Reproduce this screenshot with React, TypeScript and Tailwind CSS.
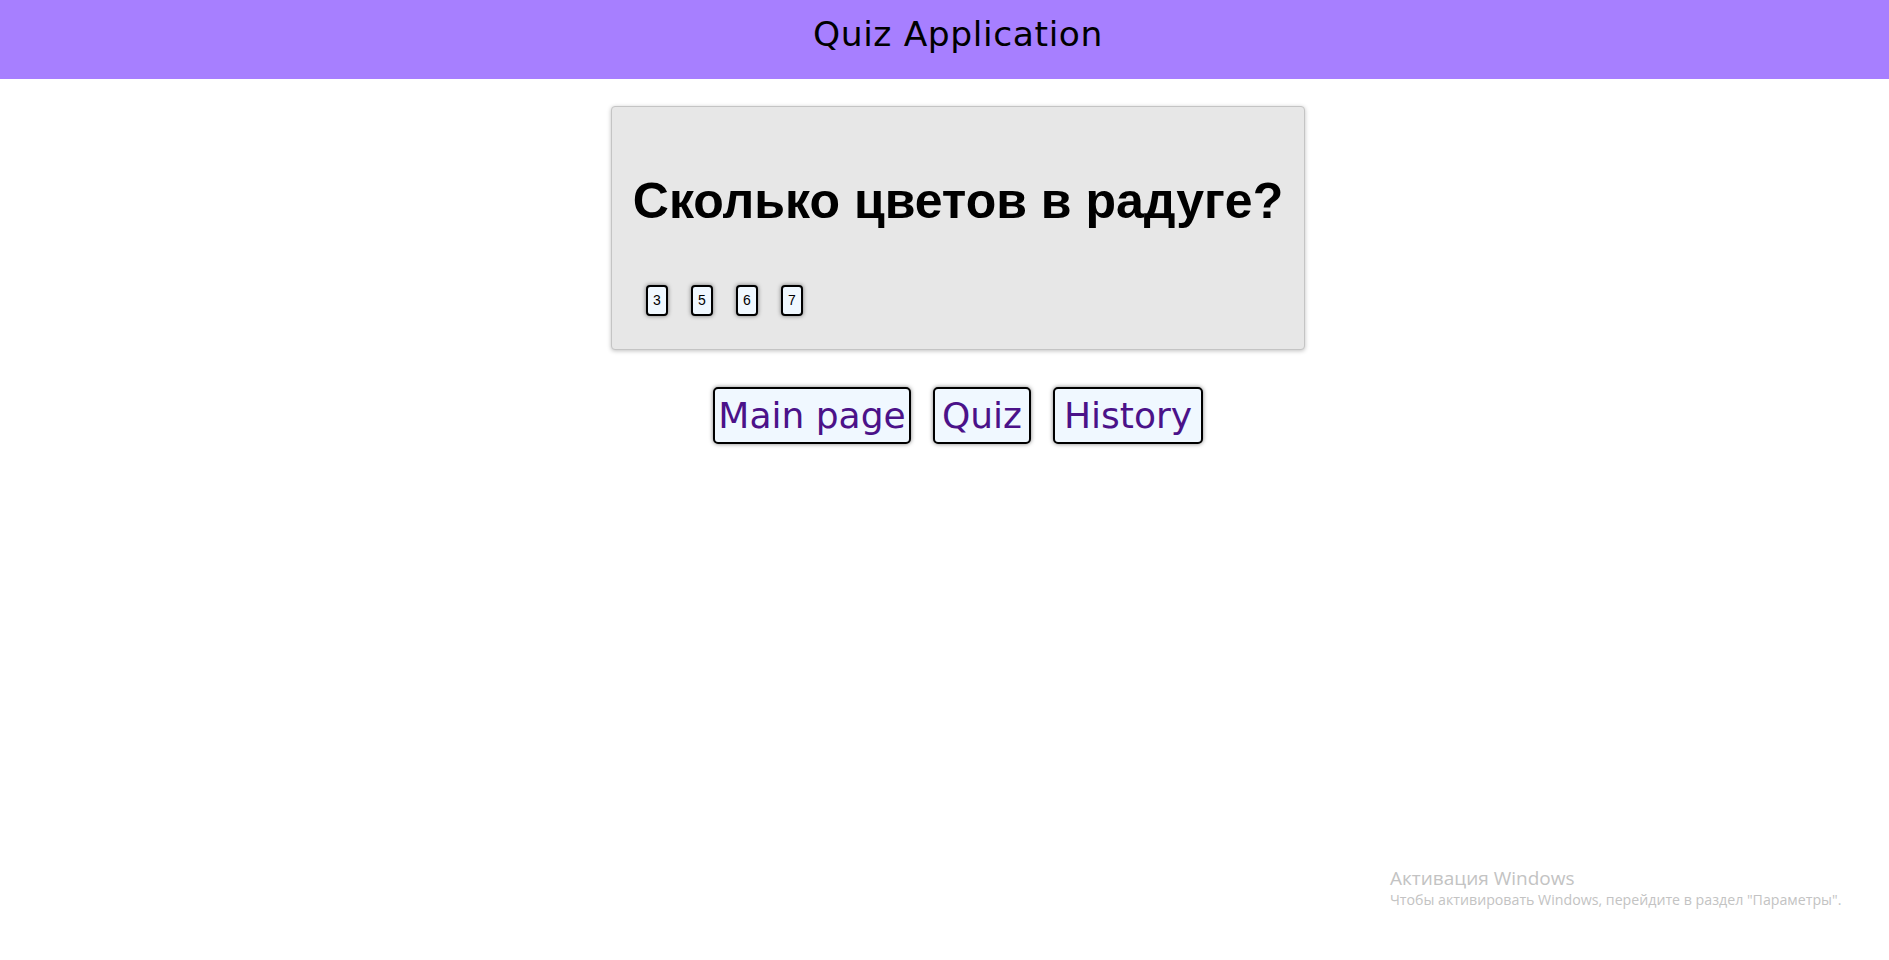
export default function App() {
  const answers = ["3", "5", "6", "7"];
  const links = [
    { label: "Main page", w: "w-[198px]" },
    { label: "Quiz", w: "w-[98px]" },
    { label: "History", w: "w-[150px]" },
  ];

  return (
    <div className="min-h-[960px] bg-white relative overflow-hidden">
      {/* Header */}
      <header className="h-[79px] bg-[#a77fff] flex items-center justify-center pl-[27px] pb-[10px]">
        <h1 className="text-[34.5px] leading-none text-black font-['DejaVu_Sans',sans-serif] tracking-[0.6px]">
          Quiz Application
        </h1>
      </header>

      <main className="flex flex-col items-center pl-[27px]">
        {/* Question card */}
        <div className="mt-[27px] bg-[#e7e7e7] border border-[#c4c4c4] rounded-[4px] shadow-[0_1px_4px_rgba(0,0,0,0.25)] pt-[66px] pb-[33px] px-[21px]">
          <h2 className="text-[50px] leading-[57px] font-bold text-black font-['Liberation_Sans',Arial,sans-serif] whitespace-nowrap">
            Сколько цветов в радуге?
          </h2>
          <div className="mt-[55px] pl-[13px] flex gap-[23px]">
            {answers.map((a) => (
              <button
                key={a}
                className="w-[22px] h-[31px] flex items-center justify-center bg-[#f0f8ff] border-2 border-black rounded-[4px] shadow-[0_0_4px_rgba(0,0,0,0.5)] text-[14px] text-black font-['Liberation_Sans',Arial,sans-serif]"
              >
                {a}
              </button>
            ))}
          </div>
        </div>

        {/* Navigation */}
        <nav className="mt-[37px] flex gap-[22px]">
          {links.map((l) => (
            <button
              key={l.label}
              className={`${l.w} h-[57px] flex items-center justify-center bg-[#f0f8ff] border-2 border-black rounded-[5px] shadow-[0_0_4px_rgba(0,0,0,0.5)] text-[36px] leading-none text-[#4b1289] font-['DejaVu_Sans',sans-serif] whitespace-nowrap`}
            >
              {l.label}
            </button>
          ))}
        </nav>
      </main>

      {/* Windows activation watermark */}
      <div className="absolute left-[1390px] top-[866px] text-[#c3c3c3] font-['Open_Sans',sans-serif] pointer-events-none">
        <div className="text-[19px] leading-[24px]">Активация Windows</div>
        <div className="text-[14.2px] leading-[20px] whitespace-nowrap">
          Чтобы активировать Windows, перейдите в раздел "Параметры".
        </div>
      </div>
    </div>
  );
}
